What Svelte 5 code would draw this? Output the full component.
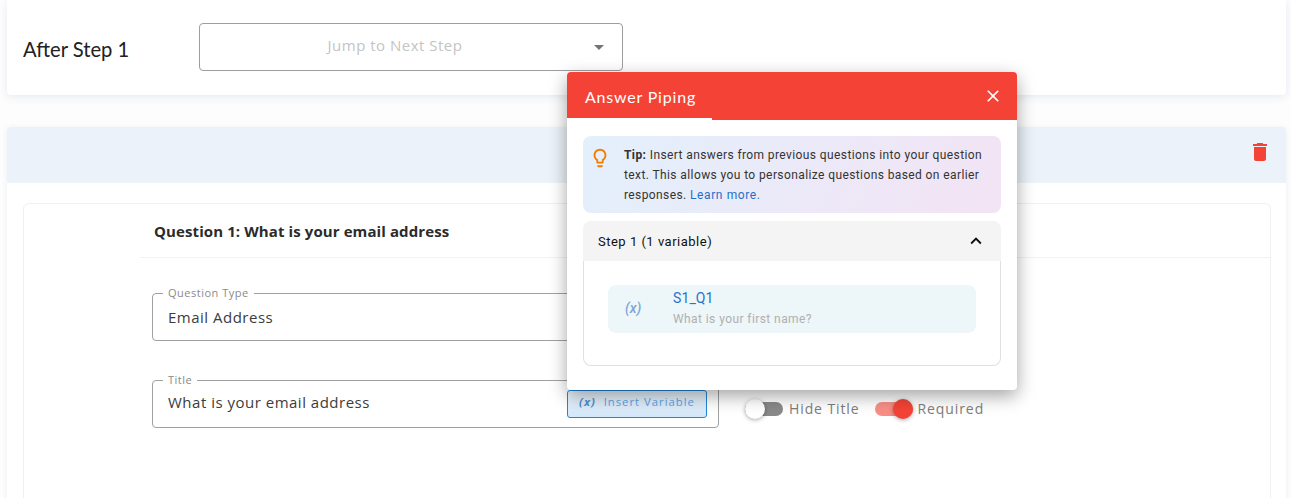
<script lang="ts">
	const variables = [{ code: 'S1_Q1', question: 'What is your first name?' }];
</script>

<div class="page">
	<section class="jump-card">
		<span class="step-label">After Step 1</span>
		<div class="select">
			<span class="select-text">Jump to Next Step</span>
			<span class="caret"></span>
		</div>
	</section>

	<section class="question-card">
		<header class="question-head">
			<svg class="trash" viewBox="0 0 24 24"><path d="M6 19c0 1.1.9 2 2 2h8c1.1 0 2-.9 2-2V7H6v12zM19 4h-3.500l-1-1h-5l-1 1H5v2h14V4z" /></svg>
		</header>
		<div class="question-body">
			<h3 class="question-title">Question 1: What is your email address</h3>
			<div class="fields">
				<fieldset class="field">
					<legend>Question Type</legend>
					<span>Email Address</span>
				</fieldset>
				<div class="title-row">
					<fieldset class="field title-field">
						<legend>Title</legend>
						<span>What is your email address</span>
						<button class="insert"><i>(x)</i> Insert Variable</button>
					</fieldset>
					<div class="toggles">
						<span class="toggle"><span class="track"></span><span class="knob"></span></span>
						<span class="toggle-label">Hide Title</span>
						<span class="toggle on"><span class="track"></span><span class="knob"></span></span>
						<span class="toggle-label">Required</span>
					</div>
				</div>
			</div>
		</div>
	</section>

	<div class="piping">
		<header class="piping-head">
			<span class="piping-title">Answer Piping</span>
			<svg class="close" viewBox="0 0 24 24"><path d="M19 6.410 17.590 5 12 10.590 6.410 5 5 6.410 10.590 12 5 17.590 6.410 19 12 13.410 17.590 19 19 17.590 13.410 12z" /></svg>
		</header>
		<div class="tab-line"></div>
		<div class="piping-body">
			<div class="tip">
				<svg class="bulb" viewBox="0 0 24 24"><path d="M9 21c0 .5.400 1 1 1h4c.6 0 1-.5 1-1v-1H9v1zm3-19C8.100 2 5 5.100 5 9c0 2.400 1.200 4.500 3 5.700V17c0 .5.400 1 1 1h6c.6 0 1-.5 1-1v-2.300c1.800-1.300 3-3.400 3-5.700 0-3.900-3.100-7-7-7zm2.900 11.100-.9.600V16h-4v-2.300l-.9-.6C7.800 12.200 7 10.600 7 9c0-2.800 2.200-5 5-5s5 2.200 5 5c0 1.600-.8 3.200-2.100 4.100z" /></svg>
				<p><b>Tip:</b> Insert answers from previous questions into your question text. This allows you to personalize questions based on earlier responses. <span class="link">Learn more.</span></p>
			</div>
			<div class="accordion">
				<div class="accordion-head">
					<span>Step 1 (1 variable)</span>
					<svg class="chevron" viewBox="0 0 24 24"><path d="M7.410 15.410 12 10.830l4.590 4.580L18 14l-6-6-6 6z" /></svg>
				</div>
				<div class="accordion-body">
					{#each variables as v (v.code)}
						<div class="variable">
							<i class="var-icon">(x)</i>
							<div>
								<div class="var-code">{v.code}</div>
								<div class="var-question">{v.question}</div>
							</div>
						</div>
					{/each}
				</div>
			</div>
		</div>
	</div>
</div>

<style>
	:global(body) {
		margin: 0;
		background: #fff;
	}

	.page {
		position: relative;
		height: 498px;
		overflow: hidden;
		padding: 0 5px 0 7px;
		background: #fdfdfe;
		font-family: 'Roboto', sans-serif;
	}

	/* Jump card */
	.jump-card {
		height: 95px;
		display: flex;
		align-items: flex-start;
		padding-left: 16px;
		background: #fff;
		border-radius: 0 0 4px 4px;
		box-shadow: 0 2px 8px rgba(40, 60, 100, 0.1);
		box-sizing: border-box;
		margin-bottom: 32px;
	}
	.step-label {
		width: 176px;
		margin-top: 36px;
		font-family: 'Lato', sans-serif;
		font-size: 20.2px;
		line-height: 26px;
		color: #212121;
	}
	.select {
		width: 424px;
		height: 48px;
		margin-top: 23px;
		box-sizing: border-box;
		border: 1px solid #9e9e9e;
		border-radius: 4px;
		position: relative;
		text-align: center;
		padding: 12px 32px 0 0;
		font-family: 'Open Sans', sans-serif;
		font-size: 15px;
		line-height: 18px;
		letter-spacing: 0.5px;
		color: #c4c4c4;
	}
	.caret {
		position: absolute;
		right: 18px;
		top: 21px;
		border-left: 5px solid transparent;
		border-right: 5px solid transparent;
		border-top: 5px solid #757575;
	}

	/* Question card */
	.question-card {
		background: #fff;
		border-radius: 4px 4px 0 0;
		box-shadow: 0 1px 6px rgba(40, 60, 100, 0.08);
		height: 400px;
	}
	.question-head {
		height: 56px;
		background: #ebf2f9;
		border-radius: 4px 4px 0 0;
		display: flex;
		justify-content: flex-end;
		padding: 13px 14px 0 0;
		box-sizing: border-box;
	}
	.trash {
		width: 24px;
		height: 24px;
		fill: #f44336;
	}
	.question-body {
		margin: 20px 15px 0 16px;
		height: 320px;
		box-sizing: border-box;
		border: 1px solid #f0f0f0;
		border-radius: 6px;
		padding-left: 116px;
	}
	.question-title {
		margin: 0;
		height: 54px;
		box-sizing: border-box;
		padding: 17px 0 0 14px;
		font-family: 'Open Sans', sans-serif;
		font-size: 15px;
		line-height: 20px;
		font-weight: 700;
		letter-spacing: 0.1px;
		color: #2b2b2b;
		border-bottom: 1px solid #f2f2f2;
	}
	.fields {
		padding: 29px 0 0 12px;
	}
	.field {
		position: relative;
		width: 567px;
		height: 54px;
		margin: 0 0 33px;
		box-sizing: border-box;
		border: 1px solid #a0a0a0;
		border-radius: 4px;
		padding: 0 15px;
		font-family: 'Open Sans', sans-serif;
		font-size: 15px;
		line-height: 20px;
		letter-spacing: 0.5px;
		color: #3c3c3c;
	}
	.field legend {
		padding: 0 5px;
		margin-left: -5px;
		font-size: 11px;
		line-height: 12px;
		letter-spacing: 0.5px;
		color: #8a8a8a;
	}
	.field span {
		display: block;
		margin-top: 8px;
	}
	.title-row {
		display: flex;
		align-items: flex-start;
	}
	.title-field span {
		margin-top: 6px;
	}
	.insert {
		position: absolute;
		right: 11px;
		top: 4px;
		width: 140px;
		height: 28px;
		padding: 0 0 5px;
		box-sizing: border-box;
		border: 1px solid #1f86dd;
		border-radius: 3px;
		background: linear-gradient(#eaf4fc, #d5e8fa);
		font-family: 'Open Sans', sans-serif;
		font-size: 11.3px;
		letter-spacing: 1px;
		color: #5aa5e8;
	}
	.insert i {
		font-weight: 700;
		margin-right: 4px;
		color: #4f8fd0;
	}
	.toggles {
		display: flex;
		align-items: center;
		margin: 25px 0 0 26px;
		font-family: 'Open Sans', sans-serif;
		font-size: 14px;
		letter-spacing: 0.9px;
		color: #7d7d7d;
	}
	.toggle {
		position: relative;
		width: 38px;
		height: 14px;
		flex: none;
	}
	.track {
		position: absolute;
		inset: 0;
		border-radius: 7px;
		background: #8a8a8a;
	}
	.knob {
		position: absolute;
		left: 0;
		top: -3px;
		width: 20px;
		height: 20px;
		border-radius: 50%;
		background: #fff;
		box-shadow: 0 1px 4px rgba(0, 0, 0, 0.35);
	}
	.toggle.on .track {
		background: #f88f87;
	}
	.toggle.on .knob {
		left: 18px;
		background: #f44336;
	}
	.toggle-label {
		margin: 0 15px 0 6px;
	}
	.toggle-label:last-child {
		margin: 0 0 0 5px;
	}

	/* Answer piping popover */
	.piping {
		position: absolute;
		left: 567px;
		top: 72px;
		width: 450px;
		height: 318px;
		background: #fff;
		border-radius: 4px;
		box-shadow: 0 6px 18px rgba(0, 0, 0, 0.36);
		overflow: hidden;
	}
	.piping-head {
		height: 48px;
		background: #f44336;
		display: flex;
		align-items: center;
		justify-content: space-between;
		padding: 0 14px 0 18px;
		box-sizing: border-box;
	}
	.piping-title {
		font-family: 'Lato', sans-serif;
		font-size: 16px;
		letter-spacing: 0.8px;
		color: #fff;
	}
	.close {
		width: 20px;
		height: 20px;
		fill: #fff;
	}
	.tab-line {
		width: 145px;
		height: 2px;
		margin-top: -2px;
		background: #fff;
	}
	.piping-body {
		padding: 16px 16px 0;
	}
	.tip {
		display: flex;
		height: 77px;
		box-sizing: border-box;
		padding: 9px 12px 0 7px;
		border-radius: 8px;
		background: linear-gradient(120deg, #e3f0fc, #f3e3f4);
	}
	.bulb {
		width: 22px;
		height: 22px;
		flex: none;
		fill: #f57c00;
		margin: 2px -1px 0 -1px;
	}
	.tip p {
		margin: 0 0 0 14px;
		font-size: 12px;
		line-height: 20px;
		letter-spacing: 0.4px;
		color: #333;
	}
	.tip b {
		font-weight: 700;
	}
	.link {
		color: #1f6fc9;
		letter-spacing: 0.6px;
	}
	.accordion {
		margin-top: 8px;
	}
	.accordion-head {
		height: 40px;
		box-sizing: border-box;
		display: flex;
		align-items: center;
		justify-content: space-between;
		padding: 0 14px 0 15px;
		background: #f4f4f4;
		border-radius: 8px 8px 0 0;
		font-size: 13px;
		letter-spacing: 0.5px;
		color: #111;
	}
	.chevron {
		width: 22px;
		height: 22px;
		fill: #111;
	}
	.accordion-body {
		height: 105px;
		box-sizing: border-box;
		border: 1px solid #e0e0e0;
		border-top: none;
		border-radius: 0 0 8px 8px;
		padding: 24px 24px 0;
	}
	.variable {
		display: flex;
		align-items: center;
		height: 48px;
		background: #edf6f9;
		border-radius: 8px;
		padding: 0 0 2px 17px;
		box-sizing: border-box;
	}
	.var-icon {
		width: 48px;
		flex: none;
		font-size: 14px;
		font-weight: 500;
		color: #7ba7d8;
	}
	.var-code {
		font-size: 14px;
		line-height: 18px;
		letter-spacing: 0.1px;
		color: #2a72c9;
	}
	.var-question {
		margin-top: 4px;
		font-size: 12px;
		line-height: 16px;
		letter-spacing: 0.42px;
		color: #b0b0b0;
	}
</style>
